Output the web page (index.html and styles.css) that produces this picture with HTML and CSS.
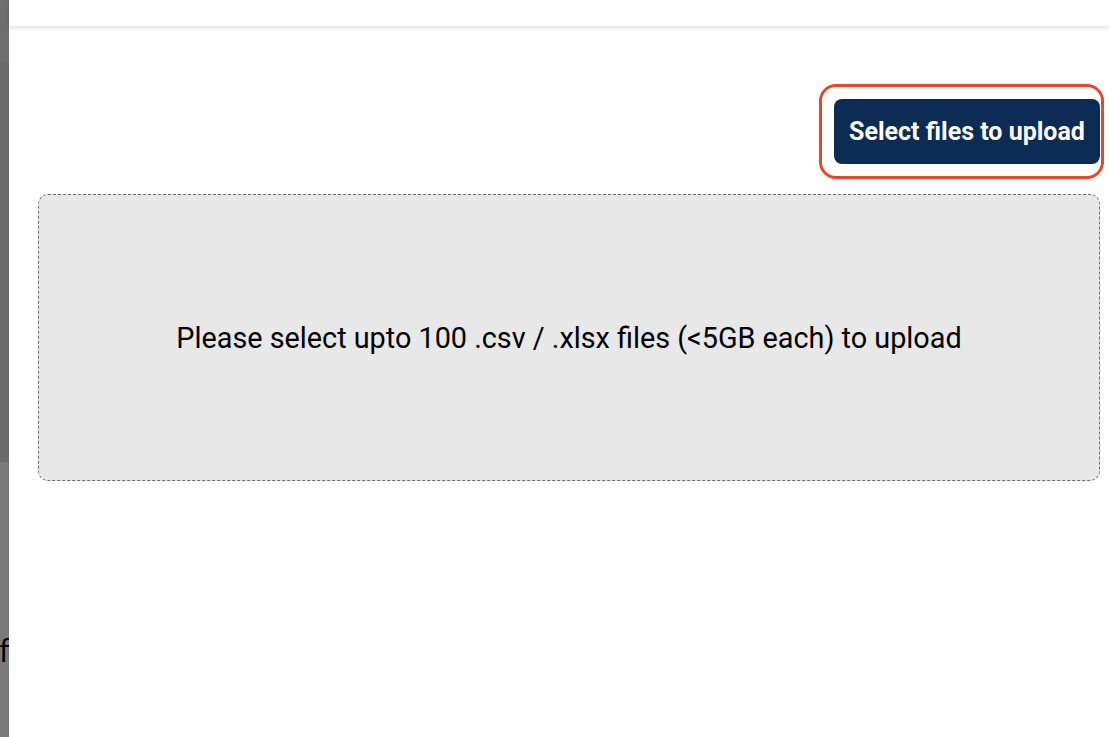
FILE: index.html
```html
<!DOCTYPE html>
<html>
<head>
<meta charset="utf-8">
<link rel="stylesheet" href="styles.css">
</head>
<body>
<div class="app">
  <aside class="strip">
    <div class="seg seg-top"></div>
    <div class="seg seg-mid"></div>
    <div class="seg seg-bot"><span class="stray">f</span></div>
  </aside>
  <div class="page">
    <header class="topbar"></header>
    <main class="content">
      <div class="actions">
        <button class="upload-btn">Select files to upload</button>
        <span class="annotation"></span>
      </div>
      <div class="dropzone">
        <p class="hint">Please select upto 100 .csv / .xlsx files (&lt;5GB each) to upload</p>
      </div>
    </main>
  </div>
</div>
</body>
</html>
```

FILE: styles.css
```css
html, body {
  margin: 0;
  padding: 0;
  height: 100%;
  background: #ffffff;
  font-family: Roboto, "Liberation Sans", sans-serif;
  overflow: hidden;
}

.app {
  display: flex;
  height: 737px;
}

.strip {
  width: 9px;
  flex: 0 0 9px;
  display: flex;
  flex-direction: column;
  overflow: hidden;
}

.seg-top {
  height: 62px;
  background: #6f6f6f;
}

.seg-mid {
  height: 400px;
  background: #6a6a6a;
}

.seg-bot {
  flex: 1;
  background: #7a7a7a;
  position: relative;
}

.stray {
  position: absolute;
  left: -1px;
  top: 173px;
  font-family: "Open Sans", sans-serif;
  font-size: 31px;
  line-height: 1;
  color: #000;
}

.page {
  flex: 1;
  display: flex;
  flex-direction: column;
}

.topbar {
  height: 26px;
  background: #ffffff;
  box-shadow: 0 2px 4px rgba(0, 0, 0, 0.12);
  position: relative;
  z-index: 1;
}

.content {
  padding: 73px 9px 0 29px;
}

.actions {
  display: flex;
  justify-content: flex-end;
  position: relative;
}

.upload-btn {
  width: 266px;
  height: 65px;
  border: none;
  border-radius: 8px;
  background: #0c2b55;
  color: #ffffff;
  font-family: Roboto, "Liberation Sans", sans-serif;
  font-weight: 700;
  font-size: 25px;
  padding: 0;
  cursor: pointer;
}

.annotation {
  position: absolute;
  right: -4px;
  top: -15px;
  width: 279px;
  height: 89px;
  border: 3px solid #e8472a;
  border-radius: 17px;
  pointer-events: none;
}

.dropzone {
  margin-top: 30px;
  height: 285px;
  border: 1px dashed #6b6b6b;
  border-radius: 10px;
  background: #e8e8e8;
  display: flex;
  align-items: center;
  justify-content: center;
}

.hint {
  margin: 0;
  font-size: 28.8px;
  color: #000;
}
```
